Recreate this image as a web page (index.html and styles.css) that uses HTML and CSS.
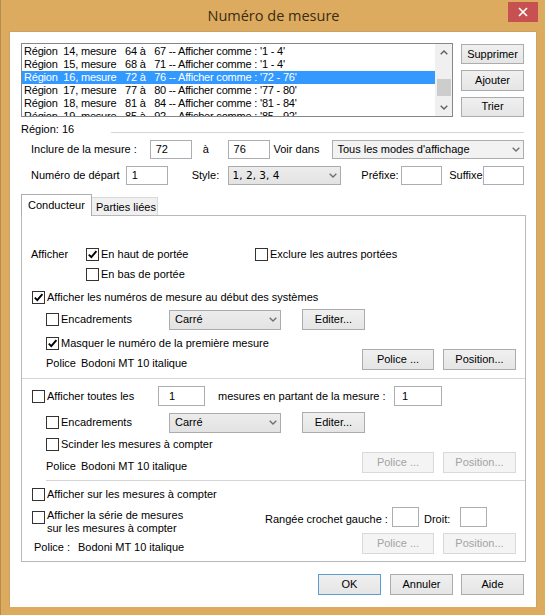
FILE: index.html
```html
<!DOCTYPE html>
<html lang="fr">
<head>
<meta charset="utf-8">
<title>Numéro de mesure</title>
<link rel="stylesheet" href="styles.css">
</head>
<body>
<div class="window">
  <div class="titlebar">
    <div class="title">Numéro de mesure</div>
    <div class="close"><svg width="10" height="10" viewBox="0 0 10 10"><path d="M1 1 L9 9 M9 1 L1 9" stroke="#fff" stroke-width="1.7" fill="none"/></svg></div>
  </div>
  <div class="client">
    <div class="top">
      <div class="listbox">
        <div class="list">
          <div class="li">Région  14, mesure   64 à   67 -- Afficher comme : '1 - 4'</div>
          <div class="li">Région  15, mesure   68 à   71 -- Afficher comme : '1 - 4'</div>
          <div class="li sel">Région  16, mesure   72 à   76 -- Afficher comme : '72 - 76'</div>
          <div class="li">Région  17, mesure   77 à   80 -- Afficher comme : '77 - 80'</div>
          <div class="li">Région  18, mesure   81 à   84 -- Afficher comme : '81 - 84'</div>
          <div class="li">Région  19, mesure   85 à   92 -- Afficher comme : '85 - 92'</div>
        </div>
        <div class="scrollbar">
          <div class="sb-arrow"><svg width="8" height="5" viewBox="0 0 8 5"><path d="M0.7 4.3 L4 1 L7.3 4.3" stroke="#606060" stroke-width="1.4" fill="none"/></svg></div>
          <div class="sb-track"><div class="sb-thumb"></div></div>
          <div class="sb-arrow"><svg width="8" height="5" viewBox="0 0 8 5"><path d="M0.7 0.7 L4 4 L7.3 0.7" stroke="#606060" stroke-width="1.4" fill="none"/></svg></div>
        </div>
      </div>
      <div class="side-buttons">
        <div class="btn">Supprimer</div>
        <div class="btn">Ajouter</div>
        <div class="btn">Trier</div>
      </div>
    </div>

    <div class="region-row">
      <div class="region-label">Région: 16</div>
      <div class="region-line"></div>
    </div>

    <div class="field-row">
      <div class="lbl w-incl">Inclure de la mesure :</div>
      <div class="input w42">72</div>
      <div class="lbl w-a">à</div>
      <div class="input w42">76</div>
      <div class="lbl w-voir">Voir dans</div>
      <div class="select light w-tous">Tous les modes d'affichage<svg class="chev" width="8" height="5" viewBox="0 0 8 5"><path d="M0.7 0.7 L4 4 L7.3 0.7" stroke="#707070" stroke-width="1.4" fill="none"/></svg></div>
    </div>

    <div class="field-row row-depart">
      <div class="lbl w-dep">Numéro de départ</div>
      <div class="input w42">1</div>
      <div class="lbl w-style">Style:</div>
      <div class="select w-sty"><span class="sty-text">1, 2, 3, 4</span><svg class="chev" width="8" height="5" viewBox="0 0 8 5"><path d="M0.7 0.7 L4 4 L7.3 0.7" stroke="#707070" stroke-width="1.4" fill="none"/></svg></div>
      <div class="lbl w-pre">Préfixe:</div>
      <div class="input w41"></div>
      <div class="lbl w-suf">Suffixe</div>
      <div class="input w41"></div>
    </div>

    <div class="tabbar">
      <div class="tab active">Conducteur</div>
      <div class="tab">Parties liées</div>
    </div>

    <div class="panel">
      <div class="prow a1">
        <div class="lbl w-aff">Afficher</div>
        <div class="chk-item w169"><span class="cb"><svg width="11" height="11" viewBox="0 0 11 11"><path d="M1.8 5.6 L4.3 8.2 L9.4 2.2" stroke="#000" stroke-width="1.9" fill="none"/></svg></span><span>En haut de portée</span></div>
        <div class="chk-item"><span class="cb"></span><span>Exclure les autres portées</span></div>
      </div>
      <div class="prow a2">
        <div class="chk-item"><span class="cb"></span><span>En bas de portée</span></div>
      </div>
      <div class="prow a3">
        <div class="chk-item"><span class="cb"><svg width="11" height="11" viewBox="0 0 11 11"><path d="M1.8 5.6 L4.3 8.2 L9.4 2.2" stroke="#000" stroke-width="1.9" fill="none"/></svg></span><span>Afficher les numéros de mesure au début des systèmes</span></div>
      </div>
      <div class="prow a4">
        <div class="chk-item w123"><span class="cb"></span><span>Encadrements</span></div>
        <div class="select w112">Carré<svg class="chev" width="8" height="5" viewBox="0 0 8 5"><path d="M0.7 0.7 L4 4 L7.3 0.7" stroke="#707070" stroke-width="1.4" fill="none"/></svg></div>
        <div class="btn edit">Editer...</div>
      </div>
      <div class="prow a5">
        <div class="chk-item"><span class="cb"><svg width="11" height="11" viewBox="0 0 11 11"><path d="M1.8 5.6 L4.3 8.2 L9.4 2.2" stroke="#000" stroke-width="1.9" fill="none"/></svg></span><span>Masquer le numéro de la première mesure</span></div>
      </div>
      <div class="prow police-row">
        <div class="police-text"><span class="pol-lbl">Police</span><span>Bodoni MT 10 italique</span></div>
        <div class="btn w72">Police ...</div>
        <div class="btn w73">Position...</div>
      </div>

      <div class="sep"></div>

      <div class="prow b1">
        <div class="chk-item w126"><span class="cb"></span><span>Afficher toutes les</span></div>
        <div class="input w47">1</div>
        <div class="lbl w-part">mesures en partant de la mesure :</div>
        <div class="input w48">1</div>
      </div>
      <div class="prow b2">
        <div class="chk-item w123"><span class="cb"></span><span>Encadrements</span></div>
        <div class="select w112">Carré<svg class="chev" width="8" height="5" viewBox="0 0 8 5"><path d="M0.7 0.7 L4 4 L7.3 0.7" stroke="#707070" stroke-width="1.4" fill="none"/></svg></div>
        <div class="btn edit">Editer...</div>
      </div>
      <div class="prow b3">
        <div class="chk-item"><span class="cb"></span><span>Scinder les mesures à compter</span></div>
      </div>
      <div class="prow police-row b4">
        <div class="police-text"><span class="pol-lbl">Police</span><span>Bodoni MT 10 italique</span></div>
        <div class="btn w72 disabled">Police ...</div>
        <div class="btn w73 disabled">Position...</div>
      </div>

      <div class="sep sep2"></div>

      <div class="prow c1">
        <div class="chk-item"><span class="cb"></span><span>Afficher sur les mesures à compter</span></div>
      </div>
      <div class="prow c2">
        <div class="chk-item multi w233"><span class="cb"></span><span>Afficher la série de mesures<br>sur les mesures à compter</span></div>
        <div class="lbl w-rang">Rangée crochet gauche :</div>
        <div class="input w27"></div>
        <div class="lbl w-droit">Droit:</div>
        <div class="input w27"></div>
      </div>
      <div class="prow police-row c3">
        <div class="police-text"><span class="pol-lbl2">Police :</span><span>Bodoni MT 10 italique</span></div>
        <div class="btn w72 disabled">Police ...</div>
        <div class="btn w73 disabled">Position...</div>
      </div>
    </div>

    <div class="dlg-buttons">
      <div class="btn ok">OK</div>
      <div class="btn annuler">Annuler</div>
      <div class="btn">Aide</div>
    </div>
  </div>
</div>
</body>
</html>
```

FILE: styles.css
```css
* { box-sizing: border-box; }

body {
  margin: 0;
  background: #dcab5f;
  font-family: "Liberation Sans", Arial, sans-serif;
  font-size: 11px;
  color: #000;
}

.window {
  width: 545px;
  height: 615px;
  background: #dcab5f;
  border-left: 1px solid #b48c4c;
}

/* Title bar */
.titlebar {
  height: 31px;
  display: grid;
  grid-template-columns: 1fr 30px 7px;
  grid-template-rows: 31px;
}
.title {
  grid-column: 1 / -1;
  grid-row: 1;
  text-align: center;
  font-family: "Open Sans", "Noto Sans", sans-serif;
  font-size: 14.5px;
  line-height: 31px;
  color: #3a2c14;
  padding-left: 1px;
}
.close {
  grid-column: 2;
  grid-row: 1;
  margin-top: 2px;
  height: 20px;
  background: #c75050;
  display: flex;
  align-items: center;
  justify-content: center;
}

/* Client area */
.client {
  margin: 0 8px 0 8px;
  height: 576px;
  background: #fff;
  padding: 11px 12px 0 11px;
  border: 1px solid #c9a264;
  border-bottom: none;
}

.top {
  display: flex;
  height: 74px;
}
.listbox {
  width: 433px;
  height: 74px;
  border: 1px solid #828790;
  display: flex;
}
.list {
  flex: 1;
  padding-top: 1px;
  overflow: hidden;
  line-height: 13px;
}
.li {
  height: 13px;
  padding-left: 2px;
  white-space: pre;
  letter-spacing: -0.2px;
}
.li.sel {
  background: #3399ff;
  color: #fff;
}

.scrollbar {
  width: 17px;
  background: #f0f0f0;
  display: flex;
  flex-direction: column;
}
.sb-arrow {
  height: 17px;
  display: flex;
  align-items: center;
  justify-content: center;
}
.sb-track {
  flex: 1;
  padding: 18px 1px 0 2px;
}
.sb-thumb {
  height: 17px;
  background: #cdcdcd;
}

.side-buttons {
  margin-left: 8px;
  padding-top: 1px;
  display: flex;
  flex-direction: column;
  gap: 6px;
}

.btn {
  width: 63px;
  height: 21px;
  border: 1px solid #acacac;
  background: linear-gradient(#f0f0f0, #e5e5e5);
  display: flex;
  align-items: center;
  justify-content: center;
  line-height: 13px;
  white-space: nowrap;
}
.btn.disabled {
  color: #a3a3a3;
  background: #f4f4f4;
  border-color: #d9d9d9;
}
.btn.ok {
  border-color: #5a9fd4;
  margin-right: 9px;
}
.btn.annuler { margin-right: 8px; }

/* Region */
.region-row {
  display: flex;
  height: 16px;
  margin-top: 4px;
  line-height: 16px;
}
.region-label { width: 90px; }
.region-line {
  flex: 1;
  height: 0;
  margin-top: 11px;
  border-top: 1px solid #d5d5d5;
}

.field-row {
  display: flex;
  align-items: center;
  height: 19px;
  margin-top: 3px;
}
.row-depart { margin-top: 7px; }

.lbl { white-space: nowrap; line-height: 13px; }
.w-incl { width: 129px; padding-left: 10px; }
.w-a { width: 36px; padding-left: 11px; }
.w-voir { width: 63px; padding-left: 4px; }
.w-dep { width: 105px; padding-left: 10px; }
.w-style { width: 60px; padding-left: 24px; }
.w-pre { width: 60px; padding-left: 20px; }
.w-suf { width: 41px; padding-left: 7px; }

.input {
  height: 19px;
  border: 1px solid #abadb3;
  background: #fff;
  padding-left: 5px;
  display: flex;
  align-items: center;
  line-height: 13px;
}
.w42 { width: 42px; }
.w41 { width: 41px; }
.w47 { width: 47px; padding-left: 10px; }
.w48 { width: 48px; padding-left: 7px; }
.w27 { width: 27px; height: 20px; }

.select {
  height: 19px;
  border: 1px solid #acacac;
  background: linear-gradient(#ececec, #e3e3e3);
  display: flex;
  align-items: center;
  justify-content: space-between;
  padding: 0 3px 0 4px;
  line-height: 13px;
  white-space: nowrap;
}
.select.light { background: #f2f2f2; }
.w-tous { width: 192px; }
.w-sty { width: 114px; }
.sty-text { font-family: "DejaVu Sans", sans-serif; font-size: 10.5px; }
.w112 { width: 112px; height: 20px; padding-left: 5px; }

/* Tabs */
.tabbar {
  display: flex;
  align-items: flex-end;
  height: 21px;
  margin-top: 9px;
}
.tab {
  height: 18px;
  width: 66px;
  border: 1px solid #d9d9d9;
  border-left: none;
  border-bottom: none;
  background: #f0f0f0;
  padding: 2px 0 0 4px;
  line-height: 14px;
  white-space: nowrap;
}
.tab.active {
  width: 71px;
  height: 22px;
  margin-bottom: -1px;
  border: 1px solid #adadad;
  border-bottom: none;
  background: #fff;
  padding: 3px 0 0 6px;
  position: relative;
  z-index: 1;
}

.panel {
  width: 505px;
  border: 1px solid #b9b9b9;
  padding-bottom: 6px;
}

.prow {
  display: flex;
  align-items: center;
  line-height: 13px;
  white-space: nowrap;
}
.chk-item {
  display: flex;
  align-items: center;
  gap: 2px;
}
.cb {
  width: 13px;
  height: 13px;
  border: 1px solid #333;
  background: #fff;
  display: flex;
  align-items: center;
  justify-content: center;
  flex: none;
}
.w169 { width: 169px; }
.w123 { width: 123px; }
.w126 { width: 126px; }
.w233 { width: 233px; }
.w-aff { width: 64px; padding-left: 9px; }

.a1 { margin-top: 32px; height: 13px; }
.a2 { margin-top: 7px; height: 13px; padding-left: 64px; }
.a3 { margin-top: 10px; height: 13px; padding-left: 10px; }
.a4 { margin-top: 5px; height: 21px; padding-left: 24px; }
.a5 { margin-top: 7px; height: 12px; padding-left: 24px; }

.btn.edit { margin-left: 21px; }

.police-row {
  height: 22px;
  padding-left: 24px;
  padding-right: 9px;
  align-items: flex-start;
  gap: 9px;
}
.police-text {
  flex: 1;
  align-self: flex-end;
  line-height: 16px;
  display: flex;
}
.pol-lbl { width: 35px; }
.pol-lbl2 { width: 44px; }
.w72 { width: 72px; }
.w73 { width: 73px; }

.sep {
  margin-top: 7px;
  border-top: 1px solid #d5d5d5;
}
.sep2 { margin-top: 6px; margin-left: 24px; }

.b1 { margin-top: 7px; height: 20px; padding-left: 10px; }
.b1 .input { height: 20px; }
.w-part { width: 189px; padding-left: 13px; }
.b2 { margin-top: 6px; height: 21px; padding-left: 24px; }
.b3 { margin-top: 5px; height: 12px; padding-left: 24px; }
.b4 { margin-top: 2px; }

.c1 { margin-top: 7px; height: 12px; padding-left: 10px; }
.c2 {
  margin-top: 7px;
  height: 26px;
  padding-left: 10px;
  align-items: flex-start;
}
.chk-item.multi { align-items: flex-start; }
.chk-item.multi .cb { margin-top: 4px; }
.chk-item.multi span:last-child { padding-top: 2px; }
.w-rang { width: 127px; padding-top: 6px; }
.w-droit { width: 41px; padding-left: 5px; padding-top: 6px; }
.c3 { padding-left: 12px; }

.dlg-buttons {
  display: flex;
  justify-content: flex-end;
  margin-top: 12px;
}
```
